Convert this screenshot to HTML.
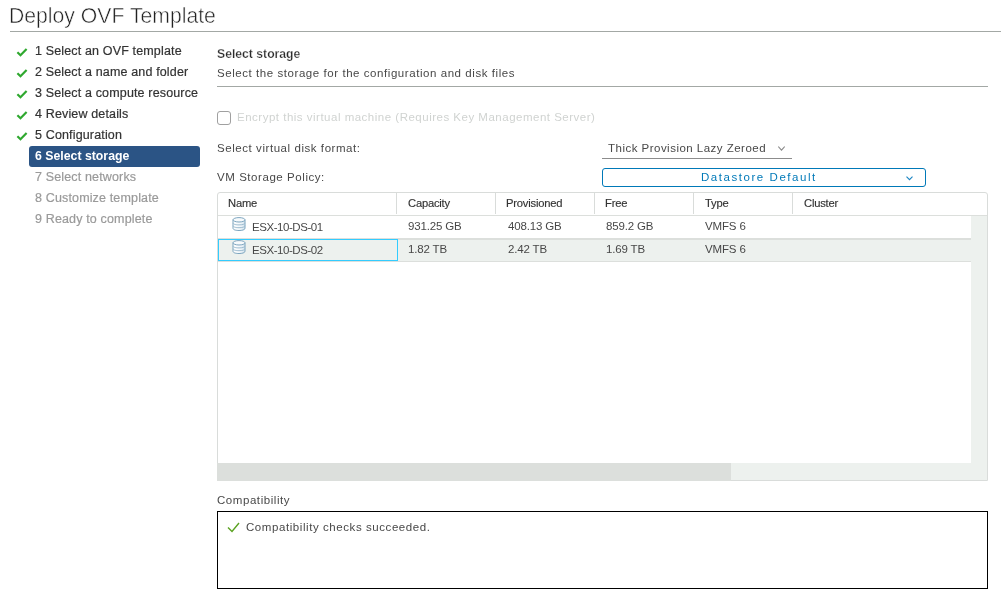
<!DOCTYPE html>
<html><head><meta charset="utf-8">
<style>
*{box-sizing:border-box;margin:0;padding:0}
html,body{will-change:transform;width:1004px;height:597px;overflow:hidden;background:#fff;font-family:"Liberation Sans",sans-serif;color:#333}
.abs{position:absolute;white-space:nowrap}
#title{left:9px;top:4px;font-size:21.2px;line-height:24px;color:#222;-webkit-text-stroke:0.5px #fff}
#tline{left:10px;top:31px;width:991px;height:1px;background:#a3a8a5}
.nav{left:35px;font-size:12.5px;line-height:15px;color:#333;letter-spacing:0.15px;-webkit-text-stroke:0.2px #333}
.dis{color:#9a9a9a;-webkit-text-stroke:0.2px #9a9a9a}
.chk{left:16px;width:12px;height:10px}
#sel{left:29px;top:146px;width:171px;height:21px;background:#2b5485;border-radius:3px}
.seltxt{color:#fff;font-weight:bold;letter-spacing:0;font-size:12.3px;-webkit-text-stroke:0}
.t12{font-size:11.5px;line-height:14px;color:#484848;letter-spacing:0.56px}
#hdr{left:217px;top:47px;font-size:12.2px;font-weight:bold;color:#2a2a2a;-webkit-text-stroke:0.25px #fff}
#sline{left:217px;top:86px;width:771px;height:1px;background:#a3a8a5}
#cb{left:217px;top:111px;width:14px;height:14px;border:1px solid #a0a0a0;border-radius:3px;background:#fff}
#enc{left:237px;top:110px;color:#d0d3d1;letter-spacing:0.5px}
#dd1{left:602px;top:141px;width:190px;height:18px;border-bottom:1px solid #8c8c8c}
#dd1t{left:608px;top:141px;color:#484848;letter-spacing:0.48px}
#dd2{left:602px;top:168px;width:324px;height:19px;border:1px solid #0079b8;border-radius:3px}
#dd2t{left:701px;top:170px;color:#0079b8;letter-spacing:1.55px}
#tbl{left:217px;top:192px;width:771px;height:289px;border:1px solid #d9dcda;border-radius:3px 3px 0 0;overflow:hidden}
.hcell{top:197px;font-size:11.2px;color:#333;letter-spacing:-0.2px;-webkit-text-stroke:0.15px #333}
.vcol{top:193px;width:1px;height:21px;background:#d9dcda}
.rline{left:218px;width:753px;height:1px;background:#dcdfdc}
.cell{font-size:11.5px;color:#484848;letter-spacing:-0.15px}
.nm{letter-spacing:-0.45px}
#row2{left:218px;top:240px;width:753px;height:21px;background:#edf1ee}
#focus{left:218px;top:239px;width:180px;height:22px;border:1px solid #33ccff}
#vtrack{left:971px;top:216px;width:16px;height:264px;background:#edf1ee}
#htrack{left:218px;top:463px;width:769px;height:17px;background:#edf1ee}
#hthumb{left:217px;top:463px;width:514px;height:18px;background:#dcdfdc}
#clabel{left:217px;top:493px;color:#484848}
#cbox{left:217px;top:511px;width:771px;height:78px;border:1px solid #000}
#ctext{left:246px;top:520px;color:#484848;letter-spacing:0.57px}
</style></head><body>
<div class="abs" id="title">Deploy OVF Template</div>
<div class="abs" id="tline"></div>

<svg class="abs chk" style="top:47px" viewBox="0 0 12 10"><path d="M1.4 5.2 L4.5 8.2 L10.6 2" fill="none" stroke="#2fa82f" stroke-width="2.2"/></svg>
<svg class="abs chk" style="top:68px" viewBox="0 0 12 10"><path d="M1.4 5.2 L4.5 8.2 L10.6 2" fill="none" stroke="#2fa82f" stroke-width="2.2"/></svg>
<svg class="abs chk" style="top:89px" viewBox="0 0 12 10"><path d="M1.4 5.2 L4.5 8.2 L10.6 2" fill="none" stroke="#2fa82f" stroke-width="2.2"/></svg>
<svg class="abs chk" style="top:110px" viewBox="0 0 12 10"><path d="M1.4 5.2 L4.5 8.2 L10.6 2" fill="none" stroke="#2fa82f" stroke-width="2.2"/></svg>
<svg class="abs chk" style="top:131px" viewBox="0 0 12 10"><path d="M1.4 5.2 L4.5 8.2 L10.6 2" fill="none" stroke="#2fa82f" stroke-width="2.2"/></svg>

<div class="abs nav" style="top:44px">1 Select an OVF template</div>
<div class="abs nav" style="top:65px">2 Select a name and folder</div>
<div class="abs nav" style="top:86px">3 Select a compute resource</div>
<div class="abs nav" style="top:107px">4 Review details</div>
<div class="abs nav" style="top:128px">5 Configuration</div>
<div class="abs" id="sel"></div>
<div class="abs nav seltxt" style="top:149px">6 Select storage</div>
<div class="abs nav dis" style="top:170px">7 Select networks</div>
<div class="abs nav dis" style="top:191px">8 Customize template</div>
<div class="abs nav dis" style="top:212px">9 Ready to complete</div>

<div class="abs" id="hdr">Select storage</div>
<div class="abs t12" style="left:217px;top:66px">Select the storage for the configuration and disk files</div>
<div class="abs" id="sline"></div>

<div class="abs" id="cb"></div>
<div class="abs t12" id="enc">Encrypt this virtual machine (Requires Key Management Server)</div>

<div class="abs t12" style="left:217px;top:141px">Select virtual disk format:</div>
<div class="abs" id="dd1"></div>
<div class="abs t12" id="dd1t">Thick Provision Lazy Zeroed</div>
<svg class="abs" style="left:778px;top:146px;width:7px;height:5px" viewBox="0 0 7 5"><path d="M0.3 0.5 L3.5 4.2 L6.7 0.5" fill="none" stroke="#8a8a8a" stroke-width="1.1"/></svg>

<div class="abs t12" style="left:217px;top:170px">VM Storage Policy:</div>
<div class="abs" id="dd2"></div>
<div class="abs t12" id="dd2t">Datastore Default</div>
<svg class="abs" style="left:906px;top:176px;width:7px;height:5px" viewBox="0 0 7 5"><path d="M0.5 0.6 L3.5 3.6 L6.5 0.6" fill="none" stroke="#1a84c2" stroke-width="1.1"/></svg>

<div class="abs" id="tbl"></div>
<div class="abs" id="row2"></div>
<div class="abs rline" style="top:215px;width:769px"></div>
<div class="abs rline" style="top:238px;height:2px"></div>
<div class="abs rline" style="top:261px"></div>
<div class="abs vcol" style="left:396px"></div>
<div class="abs vcol" style="left:495px"></div>
<div class="abs vcol" style="left:594px"></div>
<div class="abs vcol" style="left:693px"></div>
<div class="abs vcol" style="left:792px"></div>
<div class="abs hcell" style="left:228px">Name</div>
<div class="abs hcell" style="left:408px">Capacity</div>
<div class="abs hcell" style="left:506px">Provisioned</div>
<div class="abs hcell" style="left:605px">Free</div>
<div class="abs hcell" style="left:705px">Type</div>
<div class="abs hcell" style="left:804px">Cluster</div>

<div class="abs" id="focus"></div>
<svg class="abs" style="left:232px;top:217px;width:14px;height:14px" viewBox="0 0 14 14"><defs><linearGradient id="g217" x1="0" x2="1"><stop offset="0" stop-color="#fff"/><stop offset="0.55" stop-color="#f4f8fb"/><stop offset="1" stop-color="#d5e4ee"/></linearGradient></defs><path d="M1 2.8 V11.2 C1 12.9 4 13.5 7 13.5 C10 13.5 13 12.9 13 11.2 V2.8" fill="url(#g217)" stroke="#7da5bf" stroke-width="1"/><ellipse cx="7" cy="2.8" rx="6" ry="2.2" fill="#f7fafc" stroke="#7da5bf" stroke-width="1"/><path d="M1 5.9 C1 7.3 4 7.9 7 7.9 C10 7.9 13 7.3 13 5.9" fill="none" stroke="#9dbcd0" stroke-width="1"/><path d="M1 8.7 C1 10.1 4 10.7 7 10.7 C10 10.7 13 10.1 13 8.7" fill="none" stroke="#9dbcd0" stroke-width="1"/></svg>
<svg class="abs" style="left:232px;top:240px;width:14px;height:14px" viewBox="0 0 14 14"><defs><linearGradient id="g240" x1="0" x2="1"><stop offset="0" stop-color="#fff"/><stop offset="0.55" stop-color="#f4f8fb"/><stop offset="1" stop-color="#d5e4ee"/></linearGradient></defs><path d="M1 2.8 V11.2 C1 12.9 4 13.5 7 13.5 C10 13.5 13 12.9 13 11.2 V2.8" fill="url(#g240)" stroke="#7da5bf" stroke-width="1"/><ellipse cx="7" cy="2.8" rx="6" ry="2.2" fill="#f7fafc" stroke="#7da5bf" stroke-width="1"/><path d="M1 5.9 C1 7.3 4 7.9 7 7.9 C10 7.9 13 7.3 13 5.9" fill="none" stroke="#9dbcd0" stroke-width="1"/><path d="M1 8.7 C1 10.1 4 10.7 7 10.7 C10 10.7 13 10.1 13 8.7" fill="none" stroke="#9dbcd0" stroke-width="1"/></svg>

<div class="abs cell nm" style="left:252px;top:221px">ESX-10-DS-01</div>
<div class="abs cell" style="left:408px;top:220px">931.25 GB</div>
<div class="abs cell" style="left:508px;top:220px">408.13 GB</div>
<div class="abs cell" style="left:606px;top:220px">859.2 GB</div>
<div class="abs cell" style="left:705px;top:220px">VMFS 6</div>

<div class="abs cell nm" style="left:252px;top:244px">ESX-10-DS-02</div>
<div class="abs cell" style="left:408px;top:243px">1.82 TB</div>
<div class="abs cell" style="left:508px;top:243px">2.42 TB</div>
<div class="abs cell" style="left:606px;top:243px">1.69 TB</div>
<div class="abs cell" style="left:705px;top:243px">VMFS 6</div>

<div class="abs" id="vtrack"></div>
<div class="abs" id="htrack"></div>
<div class="abs" id="hthumb"></div>

<div class="abs t12" id="clabel">Compatibility</div>
<div class="abs" id="cbox"></div>
<svg class="abs" style="left:227px;top:522px;width:13px;height:11px" viewBox="0 0 13 11"><path d="M1 5.5 L5 9.5 L12 1" fill="none" stroke="#5aa220" stroke-width="1.4"/></svg>
<div class="abs t12" id="ctext">Compatibility checks succeeded.</div>

</body></html>
